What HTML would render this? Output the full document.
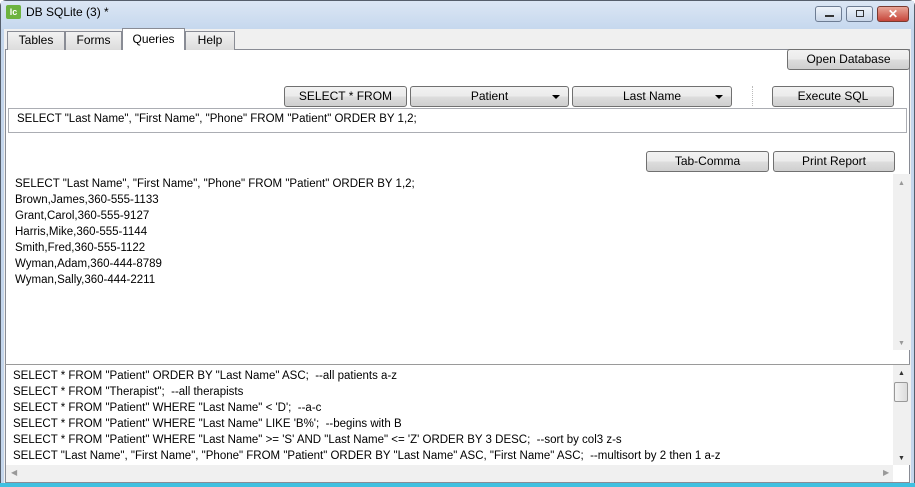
<!DOCTYPE html>
<html><head><style>
*{box-sizing:border-box;margin:0;padding:0}
body{width:915px;height:487px;overflow:hidden;background:#fff;font-family:"Liberation Sans",sans-serif;font-size:12px;color:#000;position:relative}
.a{position:absolute}
.btn{position:absolute;height:21px;border:1px solid #707070;border-radius:3px;background:linear-gradient(#f2f2f2 0%,#ebebeb 50%,#dddddd 51%,#cfcfcf 100%);text-align:center;line-height:19px;font-size:12px}
.dd:after{content:"";position:absolute;right:8px;top:8px;border-left:4px solid transparent;border-right:4px solid transparent;border-top:4px solid #000}
.tab{position:absolute;top:31px;height:19px;border:1px solid #898c95;border-bottom:none;background:linear-gradient(#f2f2f2,#dcdcdc);text-align:center;line-height:17px;font-size:12px}
.ln{position:absolute;left:0;white-space:pre;font-size:11.5px;line-height:16px}
</style></head><body>
<div class="a" style="left:0;top:0;width:915px;height:487px;background:#c4d6ec;border:1px solid #555e6b;border-radius:6px 6px 0 0"></div>
<div class="a" style="left:1px;top:1px;width:913px;height:28px;background:linear-gradient(#dbe6f4,#c6d8ee)"></div>
<div class="a" style="left:6px;top:5px;width:15px;height:14px;background:#6db33f;border-radius:2px;color:#fff;font-size:9px;font-weight:bold;line-height:14px;text-align:center">lc</div>
<div class="a" style="left:26px;top:5px;font-size:12px">DB SQLite (3) *</div>
<div class="a" style="left:815px;top:6px;width:27px;height:16px;border:1px solid #6d7c93;border-radius:3px;background:linear-gradient(#eef3fa,#c9d6e8)"><div class="a" style="left:9px;top:8px;width:9px;height:2px;background:#333"></div></div>
<div class="a" style="left:846px;top:6px;width:27px;height:16px;border:1px solid #6d7c93;border-radius:3px;background:linear-gradient(#eef3fa,#c9d6e8)"><div class="a" style="left:9px;top:3px;width:8px;height:7px;border:1px solid #333"></div></div>
<div class="a" style="left:877px;top:6px;width:32px;height:16px;border:1px solid #7a3a30;border-radius:3px;background:linear-gradient(#e8a597,#c7463a);color:#fff;font-weight:bold;text-align:center;line-height:14px;font-size:12px">✕</div>
<div class="a" style="left:4px;top:29px;width:907px;height:455px;background:#f0f0f0"></div>
<div class="a" style="left:5px;top:49px;width:905px;height:434px;background:#fff;border:1px solid #898c95"></div>
<div class="tab" style="left:7px;width:58px">Tables</div>
<div class="tab" style="left:65px;width:57px">Forms</div>
<div class="tab" style="left:185px;width:50px">Help</div>
<div class="a" style="left:122px;top:28px;width:63px;height:22px;background:#fff;border:1px solid #898c95;border-bottom:none;text-align:center;line-height:20px">Queries</div>
<div class="btn" style="left:787px;top:49px;width:123px">Open Database</div>
<div class="btn" style="left:284px;top:86px;width:123px">SELECT * FROM</div>
<div class="btn dd" style="left:410px;top:86px;width:159px">Patient</div>
<div class="btn dd" style="left:572px;top:86px;width:160px">Last Name</div>
<div class="a" style="left:752px;top:86px;height:20px;border-left:1px dotted #bbb"></div>
<div class="btn" style="left:772px;top:86px;width:122px">Execute SQL</div>
<div class="a" style="left:8px;top:108px;width:899px;height:25px;border:1px solid #abadb3"></div>
<div class="a" style="left:17px;top:113px;white-space:pre;font-size:11.5px">SELECT "Last Name", "First Name", "Phone" FROM "Patient" ORDER BY 1,2;</div>
<div class="btn" style="left:646px;top:151px;width:123px">Tab-Comma</div>
<div class="btn" style="left:773px;top:151px;width:122px">Print Report</div>
<div class="a" style="left:893px;top:174px;width:17px;height:176px;background:#f0f0f0"></div>
<div class="a" style="left:898px;top:180px;font-size:7px;color:#999">▲</div>
<div class="a" style="left:898px;top:340px;font-size:7px;color:#999">▼</div>
<div class="a" style="left:15px;top:176px">
<div class="ln" style="top:0">SELECT "Last Name", "First Name", "Phone" FROM "Patient" ORDER BY 1,2;</div>
<div class="ln" style="top:16px">Brown,James,360-555-1133</div>
<div class="ln" style="top:32px">Grant,Carol,360-555-9127</div>
<div class="ln" style="top:48px">Harris,Mike,360-555-1144</div>
<div class="ln" style="top:64px">Smith,Fred,360-555-1122</div>
<div class="ln" style="top:80px">Wyman,Adam,360-444-8789</div>
<div class="ln" style="top:96px">Wyman,Sally,360-444-2211</div>
</div>
<div class="a" style="left:5px;top:364px;width:905px;height:1px;background:#9a9a9a"></div>
<div class="a" style="left:893px;top:365px;width:17px;height:100px;background:#f0f0f0"></div>
<div class="a" style="left:898px;top:370px;font-size:7px;color:#333">▲</div>
<div class="a" style="left:894px;top:382px;width:14px;height:20px;border:1px solid #999;border-radius:2px;background:linear-gradient(90deg,#f4f4f4,#dcdcdc)"></div>
<div class="a" style="left:898px;top:455px;font-size:7px;color:#333">▼</div>
<div class="a" style="left:6px;top:465px;width:887px;height:17px;background:#f0f0f0"></div>
<div class="a" style="left:11px;top:468px;font-size:8px;color:#999">◀</div>
<div class="a" style="left:883px;top:468px;font-size:8px;color:#999">▶</div>
<div class="a" style="left:13px;top:368px">
<div class="ln" style="top:0">SELECT * FROM "Patient" ORDER BY "Last Name" ASC;  --all patients a-z</div>
<div class="ln" style="top:16px">SELECT * FROM "Therapist";  --all therapists</div>
<div class="ln" style="top:32px">SELECT * FROM "Patient" WHERE "Last Name" &lt; 'D';  --a-c</div>
<div class="ln" style="top:48px">SELECT * FROM "Patient" WHERE "Last Name" LIKE 'B%';  --begins with B</div>
<div class="ln" style="top:64px">SELECT * FROM "Patient" WHERE "Last Name" &gt;= 'S' AND "Last Name" &lt;= 'Z' ORDER BY 3 DESC;  --sort by col3 z-s</div>
<div class="ln" style="top:80px">SELECT "Last Name", "First Name", "Phone" FROM "Patient" ORDER BY "Last Name" ASC, "First Name" ASC;  --multisort by 2 then 1 a-z</div>
</div>
<div class="a" style="left:0;top:483px;width:915px;height:4px;background:#3fc0e0"></div>
</body></html>
